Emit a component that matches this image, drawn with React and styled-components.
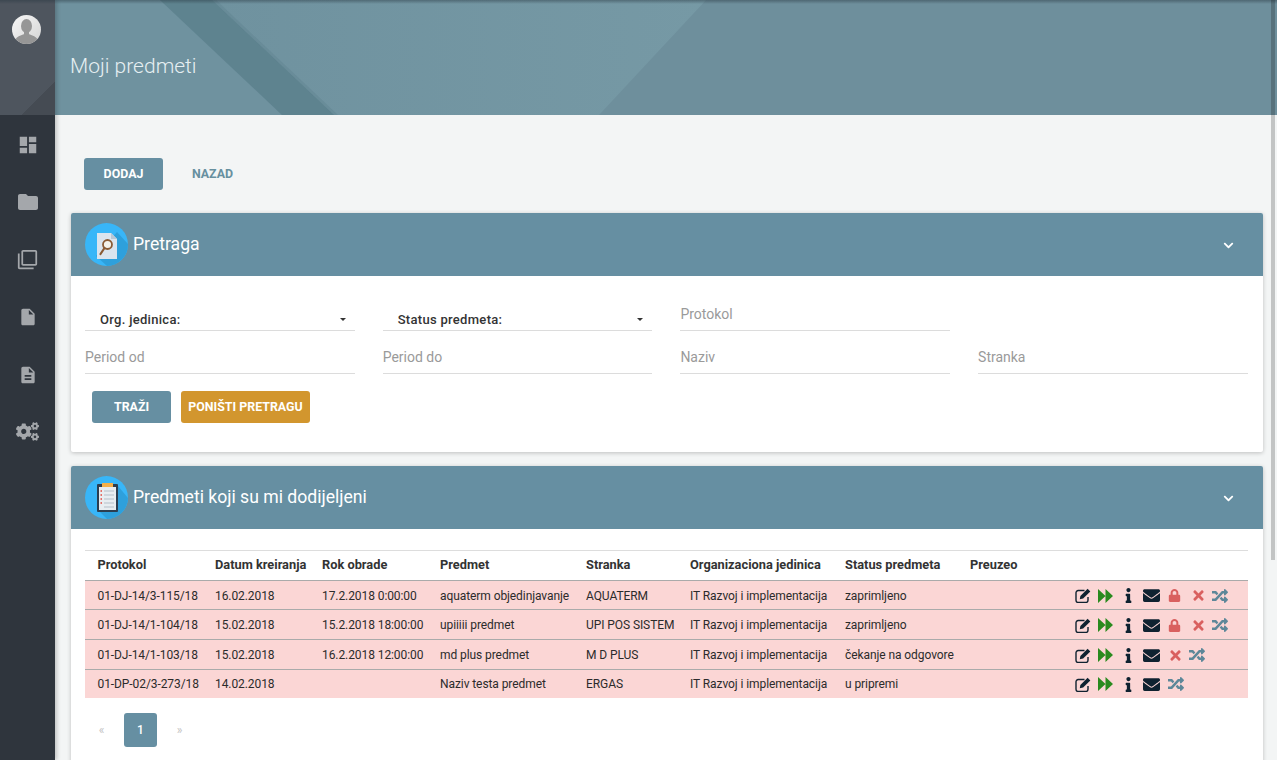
import React from 'react';
import styled, { createGlobalStyle } from 'styled-components';
import { FaInfo, FaEnvelope, FaLock, FaTimes, FaRandom, FaCogs, FaChevronDown } from 'react-icons/fa';
import { MdDashboard, MdFolder, MdFilterNone, MdInsertDriveFile, MdDescription } from 'react-icons/md';

const GlobalStyle = createGlobalStyle`
  html, body {
    margin: 0;
    height: 100%;
    overflow: hidden;
    background: #f3f5f5;
    font-family: Roboto, "Liberation Sans", sans-serif;
    color: #2b2b2b;
  }
  * { box-sizing: border-box; }
`;

const Shell = styled.div`
  position: relative;
  display: flex;
  height: 760px;
  width: 1277px;
  overflow: hidden;
`;

const TopShade = styled.div`
  position: absolute;
  top: 0;
  left: 0;
  right: 0;
  height: 4px;
  background: linear-gradient(rgba(40, 55, 65, 0.45), rgba(40, 55, 65, 0));
  z-index: 3;
`;

const ScrollThumb = styled.div`
  position: absolute;
  top: 0;
  right: 2px;
  width: 4px;
  height: 560px;
  background: rgba(0, 0, 0, 0.2);
  z-index: 3;
`;

const Sidebar = styled.aside`
  flex: 0 0 55px;
  display: flex;
  flex-direction: column;
  background: #2f353d;
  box-shadow: 2px 0 4px rgba(0, 0, 0, 0.2);
  z-index: 2;
`;

const SideTop = styled.div`
  height: 115px;
  padding: 15px 0 0 12px;
  background: linear-gradient(135deg, #4e555e 0 80%, #454b53 80% 100%);
`;

const Avatar = styled.div`
  width: 29px;
  height: 29px;
  border-radius: 50%;
  overflow: hidden;
  background: linear-gradient(135deg, #f7f7f7, #d4d4d4);
`;

const SideNav = styled.nav`
  display: flex;
  flex-direction: column;
  align-items: center;
  padding-top: 16px;
  gap: 29.4px;
  color: #a4a7ab;
`;

const SideIcon = styled.span`
  display: flex;
  width: 28px;
  height: 28px;
  align-items: center;
  justify-content: center;
  font-size: ${props => props.size || 24}px;
`;

const Main = styled.main`
  flex: 1;
  height: 760px;
  overflow: hidden;
`;

const Banner = styled.header`
  position: relative;
  height: 115px;
  padding: 50px 0 0 15px;
  background: #6e8f9c;
  overflow: hidden;
`;

const BannerArt = styled.svg`
  position: absolute;
  inset: 0;
  width: 100%;
  height: 100%;
`;

const PageTitle = styled.h1`
  position: relative;
  margin: 0;
  font-size: 21px;
  line-height: 32px;
  font-weight: 300;
  color: #e6eff2;
`;

const Page = styled.div`
  padding: 43px 14px 0 16px;
`;

const ActionRow = styled.div`
  display: flex;
  padding-left: 13px;
  gap: 8px;
  margin-bottom: 23px;
`;

const Button = styled.button`
  height: 32px;
  width: ${props => props.w}px;
  border: 0;
  border-radius: 3px;
  padding: 0 0 2px;
  background: ${props => props.color || 'transparent'};
  color: ${props => (props.color ? '#fff' : '#67909f')};
  font: 700 12.4px Roboto, sans-serif;
`;

const Card = styled.section`
  background: #fff;
  border-radius: 2px;
  box-shadow: 0 1px 4px rgba(0, 0, 0, 0.22);
  margin-bottom: 14px;
`;

const CardHead = styled.div`
  display: flex;
  align-items: center;
  height: 63px;
  padding: 0 29px 0 14px;
  background: #668fa2;
  border-radius: 2px 2px 0 0;
  color: #fff;
`;

const CardIcon = styled.svg`
  width: 43px;
  height: 43px;
  margin-right: 5px;
`;

const CardTitle = styled.h2`
  flex: 1;
  margin: 0 0 2px;
  font-size: 17.6px;
  font-weight: 400;
  color: #fff;
`;

const Chevron = styled(FaChevronDown)`
  font-size: 11px;
  margin-top: 2px;
`;

const FilterBody = styled.div`
  padding: 15px 14px 29px;
`;

const FilterGrid = styled.div`
  display: grid;
  grid-template-columns: repeat(4, 269.7px);
  column-gap: 28px;
  grid-auto-rows: 43px;
  margin-bottom: 14px;
`;

const Select = styled.div`
  display: flex;
  align-items: center;
  justify-content: space-between;
  height: 26px;
  margin-top: 14px;
  padding: 4px 9px 0 15px;
  border-bottom: 1px solid #dcdcdc;
  font-size: 13px;
  font-weight: 500;
  letter-spacing: 0.3px;
  color: #333;
`;

const Caret = styled.span`
  border-left: 3px solid transparent;
  border-right: 3px solid transparent;
  border-top: 3px solid #333;
`;

const Field = styled.div`
  height: 37px;
  margin-top: 3px;
  padding-top: 8px;
  border-bottom: 1px solid #dcdcdc;
  font-size: 14px;
  line-height: 24px;
  color: #9a9a9a;
`;

const ButtonRow = styled.div`
  display: flex;
  gap: 10px;
  padding-left: 7px;
`;

const ResultsBody = styled.div`
  padding: 21px 15px 14px 14px;
`;

const Table = styled.table`
  width: 1163px;
  border-collapse: collapse;
  table-layout: fixed;
  font-size: 12px;
`;

const Th = styled.th`
  height: 30px;
  padding: 0 0 2px ${props => props.pad || 0}px;
  border-top: 1px solid #ddd;
  border-bottom: 1px solid #aaa;
  font-size: 12.8px;
  font-weight: 700;
  text-align: left;
  color: #333;
`;

const Td = styled.td`
  height: 30px;
  padding: 1px 0 0 ${props => props.pad || 0}px;
  white-space: nowrap;
  letter-spacing: -0.08px;
  color: #2b2b2b;
`;

const Row = styled.tr`
  background: #fbd6d5;
  border-bottom: 1px solid #aaa;
  &:first-child ${Td} { height: 29px; }
  &:last-child { border-bottom: 0; }
  &:last-child ${Td} { height: 28px; }
`;

const Actions = styled.div`
  display: flex;
  align-items: center;
  padding-left: 2px;
`;

const ActionIcon = styled.span`
  display: flex;
  flex: 0 0 ${props => props.w}px;
  font-size: ${props => props.size || 15}px;
  color: ${props => props.color || '#0f2230'};
  svg {
    height: 1em;
    width: auto;
  }
`;

const Pager = styled.div`
  display: flex;
  align-items: center;
  margin: 15px 0 40px;
  font-size: 12px;
  color: #c4c4c4;
`;

const PageLink = styled.span`
  display: flex;
  align-items: center;
  justify-content: center;
  width: 33px;
  height: 34px;
  border-radius: 3px;
  margin: 0 ${props => (props.active ? 6 : 0)}px;
  background: ${props => (props.active ? '#668fa2' : 'transparent')};
  color: ${props => (props.active ? '#fff' : '#c4c4c4')};
  font-weight: ${props => (props.active ? 500 : 400)};
`;

const EditGlyph = () => (
  <svg viewBox="0 0 16 15">
    <path d="M9.500 2.500H3.200A2.200 2.200 0 0 0 1 4.700v7.600a2.200 2.200 0 0 0 2.200 2.200h7.600a2.200 2.200 0 0 0 2.200-2.200V9" fill="none" stroke="#0f2230" strokeWidth="1.400" />
    <path d="M4.800 11.200l.6-3.300L12.600.7l2.700 2.700-7.200 7.200z" fill="#0f2230" />
  </svg>
);

const PlayGlyph = () => (
  <svg viewBox="0 0 15 14">
    <path d="M0 0l7.500 7L0 14zM7.500 0L15 7l-7.500 7z" fill="#2a8a1e" />
  </svg>
);

const SearchBadge = () => (
  <CardIcon viewBox="0 0 43 43">
    <circle cx="21.5" cy="21.5" r="21.5" fill="#38b6f8" />
    <path d="M32 9l11 12a21.500 21.500 0 0 1-21 22L11 33z" fill="#2ea0dc" />
    <path d="M12 10h14l6 6v20H12z" fill="#dbe4ee" />
    <path d="M26 10l6 6h-6z" fill="#b9c7d6" />
    <circle cx="22.500" cy="21.500" r="4.500" fill="#f3f1ea" stroke="#8a5a34" strokeWidth="1.800" />
    <path d="M19.500 25l-4 6" stroke="#8a5a34" strokeWidth="2.200" strokeLinecap="round" />
  </CardIcon>
);

const ListBadge = () => (
  <CardIcon viewBox="0 0 43 43">
    <circle cx="21.5" cy="21.5" r="21.5" fill="#38b6f8" />
    <path d="M33 10l10 12a21.500 21.500 0 0 1-21 21L12 33z" fill="#2ea0dc" />
    <rect x="12" y="8" width="21" height="28" rx="1" fill="#2c3e50" />
    <rect x="14" y="11" width="17" height="23" fill="#e8edf1" />
    <rect x="17" y="7" width="11" height="4" fill="#f4b04a" />
    <path d="M19 15h10M19 19h10M19 23h10M19 27h10M19 31h10" stroke="#b4c0ca" strokeWidth="1.200" />
    <path d="M15.500 15h1.500M15.500 19h1.500M15.500 23h1.500M15.500 27h1.500" stroke="#e0483e" strokeWidth="1.400" />
  </CardIcon>
);

const columns = [
  { label: 'Protokol', w: 130, pad: 12.5 },
  { label: 'Datum kreiranja', w: 107 },
  { label: 'Rok obrade', w: 118 },
  { label: 'Predmet', w: 146 },
  { label: 'Stranka', w: 104 },
  { label: 'Organizaciona jedinica', w: 155 },
  { label: 'Status predmeta', w: 125 },
  { label: 'Preuzeo', w: 103 },
  { label: '', w: 175 },
];

const rows = [
  { protokol: '01-DJ-14/3-115/18', datum: '16.02.2018', rok: '17.2.2018 0:00:00', predmet: 'aquaterm objedinjavanje', stranka: 'AQUATERM', status: 'zaprimljeno', lock: true, remove: true },
  { protokol: '01-DJ-14/1-104/18', datum: '15.02.2018', rok: '15.2.2018 18:00:00', predmet: 'upiiiii predmet', stranka: 'UPI POS SISTEM', status: 'zaprimljeno', lock: true, remove: true },
  { protokol: '01-DJ-14/1-103/18', datum: '15.02.2018', rok: '16.2.2018 12:00:00', predmet: 'md plus predmet', stranka: 'M D PLUS', status: 'čekanje na odgovore', remove: true },
  { protokol: '01-DP-02/3-273/18', datum: '14.02.2018', rok: '', predmet: 'Naziv testa predmet', stranka: 'ERGAS', status: 'u pripremi' },
];

const App = () => (
  <Shell>
    <GlobalStyle />
    <TopShade />
    <ScrollThumb />
    <Sidebar>
      <SideTop>
        <Avatar>
          <svg width="29" height="29" viewBox="0 0 29 29">
            <ellipse cx="14.500" cy="11" rx="5.500" ry="7" fill="#969696" />
            <path d="M12 16h5v3c1.500 1.200 6.500 2 8 4.500V29H4v-5.500C5.500 21 10.500 20.200 12 19z" fill="#969696" />
          </svg>
        </Avatar>
      </SideTop>
      <SideNav>
        <SideIcon size={22}><MdDashboard /></SideIcon>
        <SideIcon size={24}><MdFolder /></SideIcon>
        <SideIcon size={21}><MdFilterNone /></SideIcon>
        <SideIcon size={20}><MdInsertDriveFile /></SideIcon>
        <SideIcon size={20}><MdDescription /></SideIcon>
        <SideIcon size={23}><FaCogs /></SideIcon>
      </SideNav>
    </Sidebar>
    <Main>
      <Banner>
        <BannerArt viewBox="0 0 1222 115" preserveAspectRatio="none">
          <defs>
            <linearGradient id="mid" x1="0" x2="1" y1="0" y2="0">
              <stop offset="0" stopColor="#6f929f" />
              <stop offset="1" stopColor="#7699a5" />
            </linearGradient>
          </defs>
          <path d="M0 0h105l122 115H0z" fill="#6f929f" />
          <path d="M157 0h494L544 115H279z" fill="url(#mid)" />
          <path d="M105 0h52l122 115h-52z" fill="#5e838f" />
          <path d="M157 0l122 115h4L161 0z" fill="#55788440" />
        </BannerArt>
        <PageTitle>Moji predmeti</PageTitle>
      </Banner>
      <Page>
        <ActionRow>
          <Button w={79} color="#668fa2">DODAJ</Button>
          <Button w={83}>NAZAD</Button>
        </ActionRow>
        <Card>
          <CardHead>
            <SearchBadge />
            <CardTitle>Pretraga</CardTitle>
            <Chevron />
          </CardHead>
          <FilterBody>
            <FilterGrid>
              <Select>Org. jedinica:<Caret /></Select>
              <Select>Status predmeta:<Caret /></Select>
              <Field>Protokol</Field>
              <span />
              <Field>Period od</Field>
              <Field>Period do</Field>
              <Field>Naziv</Field>
              <Field>Stranka</Field>
            </FilterGrid>
            <ButtonRow>
              <Button w={79} color="#668fa2">TRAŽI</Button>
              <Button w={129} color="#d2962e">PONIŠTI PRETRAGU</Button>
            </ButtonRow>
          </FilterBody>
        </Card>
        <Card>
          <CardHead>
            <ListBadge />
            <CardTitle>Predmeti koji su mi dodijeljeni</CardTitle>
            <Chevron />
          </CardHead>
          <ResultsBody>
            <Table>
              <colgroup>
                {columns.map(col => <col key={col.label} width={col.w} />)}
              </colgroup>
              <thead>
                <tr>
                  {columns.map(col => <Th key={col.label} pad={col.pad}>{col.label}</Th>)}
                </tr>
              </thead>
              <tbody>
                {rows.map(row => (
                  <Row key={row.protokol}>
                    <Td pad={12.5}>{row.protokol}</Td>
                    <Td>{row.datum}</Td>
                    <Td>{row.rok}</Td>
                    <Td>{row.predmet}</Td>
                    <Td>{row.stranka}</Td>
                    <Td>IT Razvoj i implementacija</Td>
                    <Td>{row.status}</Td>
                    <Td />
                    <Td>
                      <Actions>
                        <ActionIcon w={23} size={15}><EditGlyph /></ActionIcon>
                        <ActionIcon w={23} size={14}><PlayGlyph /></ActionIcon>
                        <ActionIcon w={22} size={15}><FaInfo /></ActionIcon>
                        <ActionIcon w={25} size={17}><FaEnvelope /></ActionIcon>
                        {row.lock && <ActionIcon w={22.5} size={13} color="#d9605f"><FaLock /></ActionIcon>}
                        {row.remove && <ActionIcon w={21} size={15} color="#d9605f"><FaTimes /></ActionIcon>}
                        <ActionIcon w={17} size={16} color="#5d8799"><FaRandom /></ActionIcon>
                      </Actions>
                    </Td>
                  </Row>
                ))}
              </tbody>
            </Table>
            <Pager>
              <PageLink>«</PageLink>
              <PageLink active>1</PageLink>
              <PageLink>»</PageLink>
            </Pager>
          </ResultsBody>
        </Card>
      </Page>
    </Main>
  </Shell>
);

export default App;
